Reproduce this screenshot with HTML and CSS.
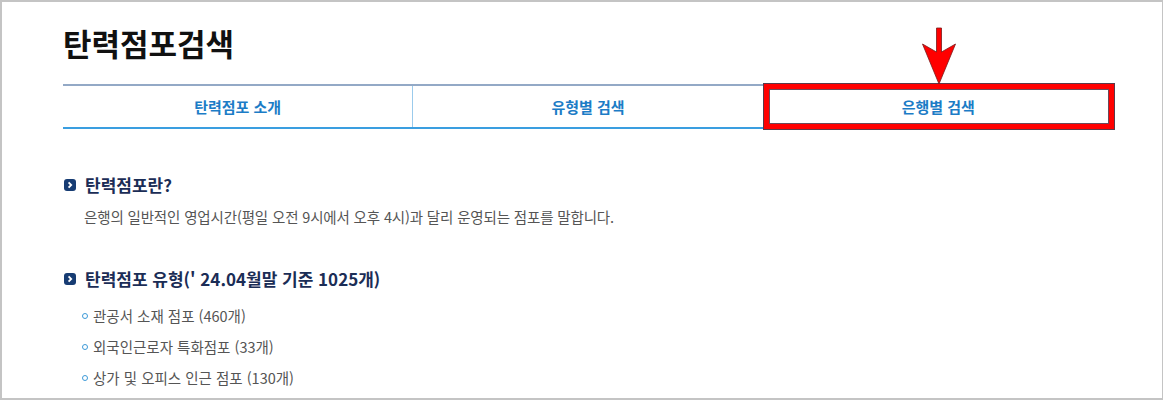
FILE: index.html
```html
<!DOCTYPE html>
<html lang="ko">
<head>
<meta charset="utf-8">
<title>탄력점포검색</title>
<link rel="stylesheet" href="styles.css">
</head>
<body>
<div class="frame">
  <h1 class="title">탄력점포검색</h1>
  <nav class="tabs">
    <a class="tab">탄력점포 소개</a>
    <a class="tab">유형별 검색</a>
    <a class="tab tab-marked">은행별 검색
      <span class="mark-box"></span>
      <svg class="mark-arrow" width="36" height="58" viewBox="0 0 36 58">
        <path d="M15.5 1 H20.5 V25 L34.5 17 L18 57 L1.5 17 L15.5 25 Z" fill="#ff0000" stroke="#7a1a1a" stroke-width="0.8" stroke-linejoin="miter"/>
      </svg>
    </a>
  </nav>
  <section class="sec sec-first">
    <h2 class="sec-title"><span class="sec-icon"><svg width="12" height="12" viewBox="0 0 12 12"><path d="M4.6 3.4 L7.2 6 L4.6 8.6" fill="none" stroke="#fff" stroke-width="1.8"/></svg></span>탄력점포란?</h2>
    <p class="desc">은행의 일반적인 영업시간(평일 오전 9시에서 오후 4시)과 달리 운영되는 점포를 말합니다.</p>
  </section>
  <section class="sec">
    <h2 class="sec-title"><span class="sec-icon"><svg width="12" height="12" viewBox="0 0 12 12"><path d="M4.6 3.4 L7.2 6 L4.6 8.6" fill="none" stroke="#fff" stroke-width="1.8"/></svg></span>탄력점포 유형(' 24.04월말 기준 1025개)</h2>
    <ul class="types">
      <li>관공서 소재 점포 (460개)</li>
      <li>외국인근로자 특화점포 (33개)</li>
      <li>상가 및 오피스 인근 점포 (130개)</li>
    </ul>
  </section>
</div>
</body>
</html>
```

FILE: styles.css
```css
html, body {
  margin: 0;
  padding: 0;
  background: #fff;
}
body {
  font-family: "Noto Sans CJK KR", "Noto Sans", sans-serif;
}
.frame {
  box-sizing: border-box;
  width: 1163px;
  height: 400px;
  border: 2px solid #c4c4c4;
  border-right-width: 1px;
  padding-left: 61px;
  overflow: hidden;
}
.title {
  margin: 0;
  padding-top: 19px;
  font-size: 31px;
  line-height: 44px;
  font-weight: 700;
  letter-spacing: 0;
  color: #111;
}
.tabs {
  display: flex;
  width: 1050px;
  margin-top: 19px;
  border-top: 2px solid #93a9c6;
  border-bottom: 2px solid #3a9ee0;
  height: 41px;
}
.tab {
  flex: 1;
  display: flex;
  align-items: center;
  justify-content: center;
  font-size: 15px;
  font-weight: 700;
  color: #1c7cc6;
  position: relative;
}
.tab + .tab {
  border-left: 1px solid #9bcbec;
}
.mark-box {
  position: absolute;
  left: 0;
  right: -1px;
  top: -2px;
  bottom: -2px;
  border: 5px solid #ff0000;
  box-shadow: 0 0 0 1px #5a3a4a, inset 0 0 0 1px #6a4a5a;
}
.mark-arrow {
  position: absolute;
  left: 157px;
  top: -59px;
}
.sec {
  padding-left: 1px;
}
.sec-first {
  margin-top: 43px;
}
.sec-title {
  margin: 0;
  display: flex;
  align-items: center;
  font-size: 17px;
  font-weight: 700;
  line-height: 26px;
  color: #1b2d56;
  letter-spacing: 0;
}
.sec-icon {
  display: inline-flex;
  width: 12px;
  height: 12px;
  border-radius: 3px;
  background: #173c73;
  margin-right: 9px;
}
.desc {
  margin: 8px 0 0 20px;
  font-size: 14.5px;
  line-height: 22px;
  color: #555;
  letter-spacing: -0.15px;
}
.sec + .sec {
  margin-top: 38px;
}
.types {
  list-style: none;
  margin: 8px 0 0 18px;
  padding: 0;
}
.types li {
  display: flex;
  align-items: center;
  font-size: 14.5px;
  line-height: 31px;
  color: #555;
}
.types li::before {
  content: "";
  box-sizing: border-box;
  width: 6px;
  height: 6px;
  border: 1.5px solid #3d9ad8;
  border-radius: 50%;
  margin-right: 5px;
}
```
